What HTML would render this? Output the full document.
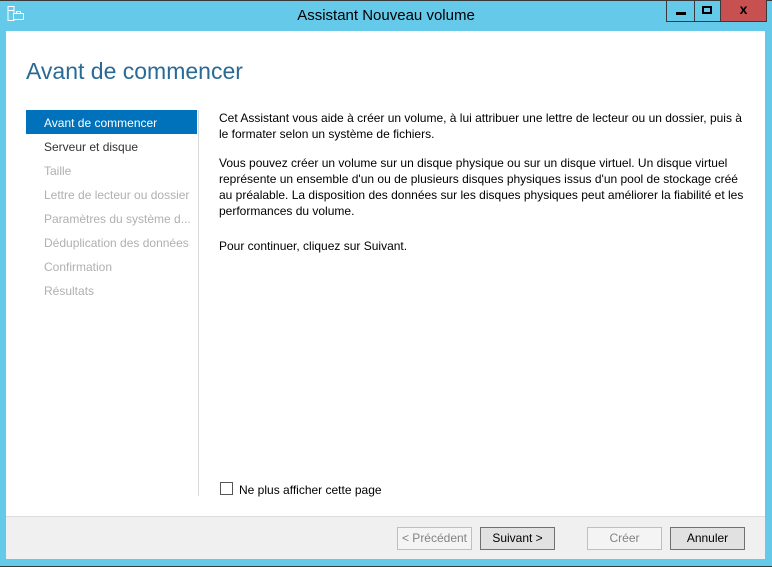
<!DOCTYPE html>
<html><head><meta charset="utf-8"><style>
*{margin:0;padding:0;box-sizing:border-box}
body{width:772px;height:567px;background:#65caea;font-family:"Liberation Sans",sans-serif;position:relative;overflow:hidden;font-size:12px;color:#000}
.abs{position:absolute}
.btn{position:absolute;top:527px;width:75px;height:23px;border:1px solid #707070;background:#e1e1e1;text-align:center;line-height:21px;font-size:12px}
.dis{border-color:#bfbfbf;background:#f4f4f4;color:#838383}
.nav{position:absolute;left:44px;font-size:12px;color:#b0b0b0}
p{margin-bottom:13px;line-height:16px}
</style></head><body>
<div class="abs" style="left:0;top:0;width:772px;height:1px;background:#3a3a3a"></div>
<div class="abs" style="left:0;top:566px;width:772px;height:1px;background:#3a3a3a"></div>
<svg class="abs" style="left:7px;top:6px" width="18" height="16"><rect x="1" y="0.5" width="6" height="14" fill="none" stroke="#fff"/><rect x="1" y="4" width="6" height="1" fill="#fff"/><rect x="6.5" y="7.5" width="10" height="6" fill="#65caea" stroke="#fff"/><rect x="9.5" y="5.5" width="4" height="2" fill="none" stroke="#fff"/></svg>
<div class="abs" style="left:0;top:7px;width:772px;text-align:center;font-size:15px;color:#000">Assistant Nouveau volume</div>
<div class="abs" style="left:666px;top:0;width:29px;height:22px;border:1px solid #3a3a3a;border-top:none"><div class="abs" style="left:9px;top:12px;width:10px;height:3px;background:#000"></div></div>
<div class="abs" style="left:694px;top:0;width:27px;height:22px;border:1px solid #3a3a3a;border-top:none;border-left:none"><div class="abs" style="left:8px;top:6px;width:10px;height:8px;border:2px solid #000"></div></div>
<div class="abs" style="left:720px;top:0;width:47px;height:22px;background:#c75050;border:1px solid #3a3a3a;border-top:none;text-align:center;font-weight:bold;font-size:14px;line-height:19px">x</div>
<div class="abs" style="left:6px;top:31px;width:759px;height:485px;background:#fff"></div>
<div class="abs" style="left:6px;top:516px;width:759px;height:43px;background:#f0f0f0;border-top:1px solid #dcdcdc"></div>
<div class="abs" style="left:26px;top:58px;font-size:23px;color:#2a6a96">Avant de commencer</div>
<div class="abs" style="left:26px;top:110px;width:171px;height:24px;background:#0072bc"></div>
<div class="abs" style="left:198px;top:110px;width:1px;height:386px;background:#d8d8d8"></div>
<div class="nav" style="top:116px;color:#fff">Avant de commencer</div>
<div class="nav" style="top:140px;color:#333">Serveur et disque</div>
<div class="nav" style="top:164px">Taille</div>
<div class="nav" style="top:188px">Lettre de lecteur ou dossier</div>
<div class="nav" style="top:212px">Paramètres du système d...</div>
<div class="nav" style="top:236px">Déduplication des données</div>
<div class="nav" style="top:260px">Confirmation</div>
<div class="nav" style="top:284px">Résultats</div>
<div class="abs" style="left:219px;top:110px;width:530px">
<p>Cet Assistant vous aide à créer un volume, à lui attribuer une lettre de lecteur ou un dossier, puis à le formater selon un système de fichiers.</p>
<p style="margin-bottom:19px">Vous pouvez créer un volume sur un disque physique ou sur un disque virtuel. Un disque virtuel représente un ensemble d'un ou de plusieurs disques physiques issus d'un pool de stockage créé au préalable. La disposition des données sur les disques physiques peut améliorer la fiabilité et les performances du volume.</p>
<p>Pour continuer, cliquez sur Suivant.</p>
</div>
<div class="abs" style="left:220px;top:482px;width:13px;height:13px;border:1px solid #555;background:#fff"></div>
<div class="abs" style="left:239px;top:483px">Ne plus afficher cette page</div>
<div class="btn dis" style="left:397px">&lt; Précédent</div>
<div class="btn" style="left:480px">Suivant &gt;</div>
<div class="btn dis" style="left:587px">Créer</div>
<div class="btn" style="left:670px">Annuler</div>
</body></html>
